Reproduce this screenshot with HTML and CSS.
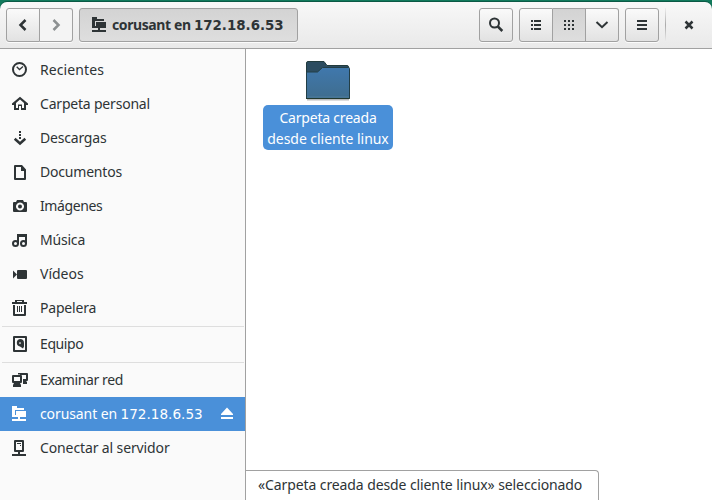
FILE: index.html
```html
<!DOCTYPE html>
<html lang="es">
<head>
<meta charset="utf-8">
<title>Archivos</title>
<link rel="stylesheet" href="styles.css">
</head>
<body>
<svg class="defs" width="0" height="0">
  <symbol id="server-folder" viewBox="0 0 16 16"><path d="M0 0h5v2h7v2H3v7H0zM4 5h10v6H4zM0 9h4v2H0zM6 11h2v3H6zM0 13h14v2H0z"/></symbol>
</svg>
<div class="window">
  <header class="header">
    <div class="group nav">
      <button class="btn"><svg class="icon" viewBox="0 0 16 16"><path class="line arrow" d="M10.500 3L5.500 8l5 5"/></svg></button>
      <button class="btn disabled"><svg class="icon" viewBox="0 0 16 16"><path class="line arrow" d="M5.500 3l5 5-5 5"/></svg></button>
    </div>
    <button class="btn path"><svg class="icon crisp"><use href="#server-folder"/></svg><span class="name">corusant en <span class="digits">172.18.6.53</span></span></button>
    <div class="spacer"></div>
    <button class="btn single"><svg class="icon" viewBox="0 0 16 16"><circle class="line" cx="6.500" cy="6" r="4.500"/><path class="line arrow" d="M9.800 9.500L14.300 14"/></svg></button>
    <div class="group views">
      <button class="btn"><svg class="icon crisp" viewBox="0 0 16 16"><path d="M3 3h2v2H3zM3 7h2v2H3zM3 11h2v2H3zM6 3h7v2H6zM6 7h7v2H6zM6 11h7v2H6z"/></svg></button>
      <button class="btn active"><svg class="icon crisp" viewBox="0 0 16 16"><path d="M3 3h2v2H3zM7 3h2v2H7zM11 3h2v2h-2zM3 7h2v2H3zM7 7h2v2H7zM11 7h2v2h-2zM3 11h2v2H3zM7 11h2v2H7zM11 11h2v2h-2z"/></svg></button>
      <button class="btn"><svg class="icon" viewBox="0 0 16 16"><path class="line" d="M2.500 5L8 10.200 13.500 5"/></svg></button>
    </div>
    <button class="btn single"><svg class="icon crisp" viewBox="0 0 16 16"><path d="M3 3h10v2H3zM3 7h10v2H3zM3 11h10v2H3z"/></svg></button>
    <div class="divider"></div>
    <button class="close"><svg class="icon" viewBox="0 0 16 16"><path class="line arrow" d="M4.500 4.500l7 7M11.500 4.500l-7 7"/></svg></button>
  </header>
  <div class="body">
    <nav class="sidebar">
      <a class="row"><svg class="icon" viewBox="0 0 16 16"><circle class="line" cx="7.500" cy="7.500" r="6.500"/><path class="line thin" d="M4.700 4.700L7.500 7.500 11 4.500"/></svg><span class="wide">Recientes</span></a>
      <a class="row"><svg class="icon" viewBox="0 0 16 16"><path d="M8 .8L16 7.500V9h-2v5H9v-4H7v4H2V9H0V7.500zM8 3.500L4 7v5h2V8.500h4V12h2V7z"/></svg><span>Carpeta personal</span></a>
      <a class="row"><svg class="icon" viewBox="0 0 16 16"><path d="M7 1h2v2H7zM7 4h2v2H7zM7 7h2v2H7z"/><path class="line arrow" d="M2.700 8.700L8 13.500 13.300 8.700"/></svg><span>Descargas</span></a>
      <a class="row"><svg class="icon" viewBox="0 0 16 16"><path d="M3 1h7l4 4.500V15q0 1-1 1H3q-1 0-1-1V2q0-1 1-1zM4 3v11h8V7H9V3z" fill-rule="evenodd"/></svg><span>Documentos</span></a>
      <a class="row"><svg class="icon" viewBox="0 0 16 16"><path fill-rule="evenodd" d="M5 2h6l1 2h2q1 0 1 1v8q0 1-1 1H2q-1 0-1-1V5q0-1 1-1h2zM8 4.500a4 4 0 1 0 .01 0z"/><circle cx="8" cy="8.500" r="2"/></svg><span class="narrow">Imágenes</span></a>
      <a class="row"><svg class="icon" viewBox="0 0 16 16"><path d="M5 2h10v10h-2V5H7v7H5z"/><circle class="line" cx="3.500" cy="11.500" r="2.500"/><circle class="line" cx="11.500" cy="11.500" r="2.500"/></svg><span>Música</span></a>
      <a class="row"><svg class="icon" viewBox="0 0 16 16"><rect x="5" y="4" width="10" height="9" rx="1"/><path d="M1 4.500l4 4-4 4z"/></svg><span class="even">Vídeos</span></a>
      <a class="row"><svg class="icon" viewBox="0 0 16 16"><path d="M3 0h9v2h3v2H0V2h3zM1 5h2v9h9V5h2v10q0 1-1 1H2q-1 0-1-1zM5 6h1v6H5zM7 6h1v6H7zM9 6h1v6H9z"/><path class="gap" d="M5 1.500h5"/></svg><span>Papelera</span></a>
      <hr>
      <a class="row"><svg class="icon" viewBox="0 0 16 16"><path fill-rule="evenodd" d="M2 0h12q1 0 1 1v14q0 1-1 1H2q-1 0-1-1V1q0-1 1-1zM3 2v12h10V2z"/><path fill-rule="evenodd" d="M8 3a4 4 0 0 1 4 4v3.500l-1 2L8 10.500a3.800 3.800 0 0 1 0-7.500zM8 6L7 7l1 1.300L9 7z"/></svg><span class="narrow">Equipo</span></a>
      <hr>
      <a class="row"><svg class="icon" viewBox="0 0 16 16"><path fill-rule="evenodd" d="M1 3h8q1 0 1 1v6q0 1-1 1H8l1 2v2H1v-2l1-2H1q-1 0-1-1V4q0-1 1-1zM2 5v4h6V5z"/><path d="M6 1h9q1 0 1 1v6q0 1-1 1h-1l1 1v2h-4V7h3V3H8v-.5H6z"/></svg><span class="narrow">Examinar red</span></a>
      <a class="row selected"><svg class="icon crisp"><use href="#server-folder"/></svg><span class="name">corusant en <span class="digits">172.18.6.53</span></span><svg class="icon eject" viewBox="0 0 16 16"><path d="M8 1.500l6 6.500v1H2V8zM2 11h12v2H2z"/></svg></a>
      <a class="row"><svg class="icon" viewBox="0 0 16 16"><path fill-rule="evenodd" d="M3 0h8q1 0 1 1v10q0 1-1 1H8v2h6v2H0v-2h6v-2H3q-1 0-1-1V1q0-1 1-1zM4 2v8h6V2zM5 3h4v1H5zM8 5h1v1H8z"/></svg><span class="slight">Conectar al servidor</span></a>
    </nav>
    <main class="content">
      <div class="item">
        <svg class="folder" width="48" height="42" viewBox="0 0 48 42">
          <defs><linearGradient id="front" x2="0" y2="1"><stop stop-color="#4078ad"/><stop offset="1" stop-color="#3f6d8e"/></linearGradient></defs>
          <path d="M3 39.500h42" stroke="#bbb" stroke-width="2"/>
          <path d="M2.500 38V3q0-1.500 1.500-1.500h16l3 4h20q1.500 0 1.500 1.500v31z" fill="#2c4c60" stroke="#223b3d"/>
          <path d="M2.500 38.500V13q0-1 1-1h10l5-4.500h26q1 0 1 1v30z" fill="url(#front)" stroke="#223e46"/>
          <path d="M3 37h42" stroke="#4e7d9b"/><path d="M2 38.500h43.500" stroke="#22382d"/>
        </svg>
        <div class="label"><span class="first">Carpeta creada</span><br><span class="second">desde cliente linux</span></div>
      </div>
      <div class="status">«Carpeta creada desde cliente linux» seleccionado</div>
    </main>
  </div>
</div>
</body>
</html>
```
FILE: styles.css
```css
* { box-sizing: border-box; }
body { margin: 0; background: #117a5c; font: 14px/20px "Noto Sans", "Open Sans", sans-serif; color: #2e3436; }
.defs { position: absolute; }
.window { height: 500px; padding-top: 2px; display: flex; flex-direction: column; }
.header { height: 47px; flex: none; display: flex; align-items: flex-start; padding: 6px 6px 0; background: linear-gradient(#f8f8f8, #e9e9e9); border-bottom: 1px solid #a1a1a1; border-radius: 7px 7px 0 0; box-shadow: 0 -1px #0b5945; }
.btn { display: flex; align-items: center; justify-content: center; width: 34px; height: 34px; padding: 0; border: 1px solid #a1a1a1; border-radius: 3px; background: linear-gradient(#fafafa, #e2e2e2); color: #2e3436; font: inherit; box-shadow: 0 1px #fbfbfb; }
.icon { width: 16px; height: 16px; flex: none; fill: currentColor; }
.crisp { shape-rendering: crispEdges; }
.line { fill: none; stroke: currentColor; stroke-width: 2; }
.arrow { stroke-width: 2.5; }
.thin { stroke-width: 1.3; }
.gap { stroke: #fafafa; }
.group { display: flex; }
.group .btn:not(:first-child) { border-left: 0; border-top-left-radius: 0; border-bottom-left-radius: 0; width: 33px; }
.group .btn:not(:last-child) { border-top-right-radius: 0; border-bottom-right-radius: 0; }
.btn.disabled { background: #f4f4f4; color: #8c9091; }
.btn.path { width: 219px; margin-left: 6px; justify-content: flex-start; padding-left: 12px; font-weight: 700; background: linear-gradient(#d3d3d3, #dedede); }
.name { line-height: 20px; }
.digits { font-family: "DejaVu Sans", sans-serif; font-size: 13.6px; line-height: 1; letter-spacing: 0; }
.path .name { margin-left: 4px; white-space: nowrap; letter-spacing: -.4px; }
.path .digits { font-size: 13.4px; }
.btn.active { background: linear-gradient(#d3d3d3, #dedede); }
.spacer { flex: 1; }
.views { margin: 0 6px; }
.divider { width: 1px; height: 34px; margin-left: 6px; background: linear-gradient(#eee, #aaa 50%, #eee); }
.close { width: 34px; height: 34px; margin-left: 6px; padding: 0; border: 0; background: none; color: #2e3436; display: flex; align-items: center; justify-content: center; }
.body { flex: 1; display: flex; min-height: 0; }
.sidebar { width: 246px; padding-top: 4px; background: #fafafa; border-right: 1px solid #a1a1a1; }
.row { display: flex; align-items: center; height: 34px; padding: 0 10px 0 12px; white-space: nowrap; }
.row > span { margin-left: 12px; letter-spacing: -.2px; }
.row > .wide { letter-spacing: .1px; }
.row > .even { letter-spacing: 0; }
.row > .narrow { letter-spacing: -.4px; }
.row > .slight { letter-spacing: -.12px; }
.row > .name { letter-spacing: -.1px; }
.row.selected { background: #4a90d9; color: #fff; }
.eject { margin-left: auto; }
hr { height: 1px; margin: 1px 1px 0 2px; border: 0; background: #dedede; }
.content { flex: 1; display: flex; flex-direction: column; align-items: flex-start; background: #fff; }
.item { display: flex; flex-direction: column; align-items: center; width: 130px; margin: 11px 0 0 17px; }
.label { width: 130px; height: 45px; margin-top: 3px; padding-top: 2px; border-radius: 5px; background: #4a90d9; color: #fff; line-height: 21px; text-align: center; white-space: nowrap; }
.first { letter-spacing: -.2px; }
.second { letter-spacing: -.05px; }
.status { width: 353px; height: 30px; margin-top: auto; padding: 4px 0 0 12px; border: solid #a1a1a1; border-width: 1px 1px 0 0; border-top-right-radius: 4px; white-space: nowrap; letter-spacing: -.1px; }
```
